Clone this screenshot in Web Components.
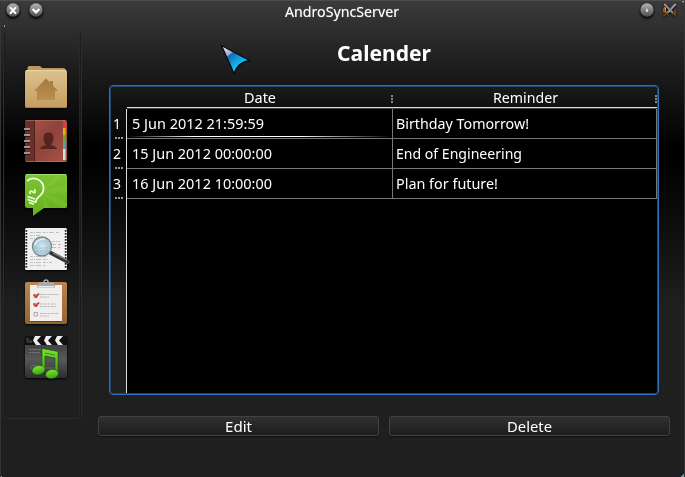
<!DOCTYPE html>
<html lang="en"><head><meta charset="utf-8"><title>AndroSyncServer</title>
<style>html,body{margin:0;background:#1f1f1f}</style></head><body>
<sync-window></sync-window>
<script>
const define = (name, html, setup) => customElements.define(name, class extends HTMLElement {
  connectedCallback() {
    if (this.shadowRoot) return;
    this.attachShadow({mode: 'open'}).innerHTML = html;
    if (setup) setup(this, this.shadowRoot);
  }
});

/* A single line of text fitted to a given width */
define('fit-text', `<style>:host{display:inline-block;white-space:nowrap;text-align:left}span{display:inline-block;transform-origin:0 50%}</style><span><slot></slot></span>`, (el, root) => {
  const s = root.querySelector('span'), w = +el.getAttribute('w');
  el.style.width = w + 'px';
  s.style.transform = `scaleX(${w / s.getBoundingClientRect().width})`;
});

const ICONS = {
home: `<defs><linearGradient id="g" x2="0" y2="1"><stop stop-color="#dcc28f"/><stop offset="1" stop-color="#c59d5e"/></linearGradient><linearGradient id="h" x2="0" y2="1"><stop stop-color="#a5793f"/><stop offset="1" stop-color="#b98f50"/></linearGradient></defs>
<path d="M2.500 6V2Q2.500 0 4.500 0H14Q16 0 17 2H38Q41 2 41 5V12H2z" fill="#bd995f"/><path d="M0 5.500Q0 4 2 4H40Q42 4 42 6V40Q42 42 40 42H2Q0 42 0 40z" fill="url(#g)"/><path d="M1 4.500H41" stroke="#ead5a8"/><path d="M0.500 41.500H41.500" stroke="#a98348"/><path d="M9 25 21 12.500 25 16.500V15H28V19.500L33 25H30V34H12V25z" fill="url(#h)"/>`,
contacts: `<defs><linearGradient id="g" x2="1" y2="1"><stop stop-color="#a9564a"/><stop offset=".5" stop-color="#8f4339"/><stop offset="1" stop-color="#a75146"/></linearGradient></defs>
<rect x="30" width="12" height="42" rx="2" fill="#a4584c"/><path d="M38 2h2.500v6H38z" fill="#e8353d"/><path d="M38 8h2.500v7H38z" fill="#f2a818"/><path d="M38 15h2.500v7H38z" fill="#5eb51d"/><path d="M38 22h2.500v7H38z" fill="#48a6c4"/><path d="M38 29h2.500v11H38z" fill="#ddd"/>
<rect width="38" height="42" rx="2" fill="url(#g)"/><path d="M2 0H9V42H2Q0 42 0 40V2Q0 0 2 0" fill="#6b302a"/><path d="M9.500 0V42" stroke="#4b201b"/><path d="M1 .5H40M1 41.500H40" stroke="#c1786b" opacity=".6"/>
<path d="M15 29Q16 26 21 25Q18.500 22 18.500 18Q18.500 12.500 23.500 12.500Q28.500 12.500 28.500 18Q28.500 22 26 25Q31 26 32 29z" fill="#54241f"/>
<path d="M0 9.500H5M0 15.500H5M0 21.500H5M0 27.500H5M0 33.500H5" stroke="#271410" stroke-width="3"/><path d="M-1 9H5M-1 15H5M-1 21H5M-1 27H5M-1 33H5" stroke="#c8c0bd" stroke-width="1.300"/>`,
idea: `<defs><linearGradient id="g" x2="0" y2="1"><stop stop-color="#7fc433"/><stop offset="1" stop-color="#64b01b"/></linearGradient></defs>
<path d="M2 0H40Q42 0 42 2V32Q42 34 40 34H19L8 42V34H2Q0 34 0 32V2Q0 0 2 0" fill="url(#g)"/><path d="M19 14 34 0H40L20 16 42 11V19L20 19 42 29V34H37L18 21 25 34H18z" fill="#a0d452" opacity=".18"/><path d="M1 .5H41" stroke="#a4db64"/>
<path d="M2 7Q6 3 12 5Q19 8 18.500 15Q18 20 13.500 23Q11 25 10.500 29" fill="none" stroke="#edffe0" stroke-width="1.800"/><path d="M5 20Q4.500 16 7 17.500T10 18.500T9.500 15M2.500 22.500 10 25M2.500 25.500 10 28M4 28.500 9 30.300" fill="none" stroke="#edffe0" stroke-width="1.600"/>`,
search: `<defs><radialGradient id="g"><stop stop-color="#d4e8ef"/><stop offset=".8" stop-color="#a9c9d9"/><stop offset="1" stop-color="#d0e1e5"/></radialGradient></defs>
<rect width="42" height="42" rx="1.500" fill="#f0f0ef"/><path d="M1.300 2V41M40.700 2V41" stroke="#222" stroke-width="1.800" stroke-dasharray="1.700 1.300"/><path d="M5 4.500H34M5 7.500H15M5 10.500H24M27 13.500H35M7 16.500H36M7 19.500H35M5 31.500H24M5 34.500H27M5 37.500H20M5 28.500H22" stroke="#777" stroke-width=".8" stroke-dasharray="3 1 1 1 5 2" opacity=".5"/>
<path d="M26 25 43 34" stroke="#353535" stroke-width="4" stroke-linecap="round"/><path d="M28 25 42 32" stroke="#999" stroke-width="1"/><circle cx="17" cy="18.500" r="9.500" fill="url(#g)" stroke="#77868b" stroke-width="1.300"/><path d="M9 20H24M10 23H23" stroke="#7193a2" stroke-width=".7" stroke-dasharray="4 1" opacity=".5"/><path d="M10 17Q12 11 20 11" stroke="#fff" stroke-width="1.500" fill="none" opacity=".7"/>`,
tasks: `<defs><linearGradient id="g" x2="0" y2="1"><stop stop-color="#b98550"/><stop offset="1" stop-color="#96622f"/></linearGradient></defs>
<rect width="42" height="42" rx="2" fill="url(#g)"/><path d="M5 3H37V39H5z" fill="#f0efed"/><path d="M5 39.500H37" stroke="#704620"/><circle cx="21" cy="0" r="2" fill="none" stroke="#aaa" stroke-width="1.500"/><path d="M12 4Q12 0 17 0H25Q30 0 30 4V5.500H12z" fill="#a9a9a9"/><path d="M13 4.500H29" stroke="#ededed"/>
<path d="M15 12.500H34M15 15H24M15 22H31M15 24.500H31M15 31.500H34M15 34H24" stroke="#bbb" stroke-width="1" stroke-dasharray="3 .7"/><path d="M9 12.500h3v3H9zM9 21.500h3v3H9zM9 30.500h3.500v3.500H9z" fill="none" stroke="#999" stroke-width=".8"/><path d="M8.500 12.500 11 15 14 11.500M8.500 21.500 11 24 14 20.500" fill="none" stroke="#d2302c" stroke-width="1.700"/>`,
media: `<defs><linearGradient id="g" x2="0" y2="1"><stop stop-color="#333"/><stop offset=".55" stop-color="#585858"/><stop offset="1" stop-color="#2e2e2e"/></linearGradient><linearGradient id="h" x2="0" y2="1"><stop stop-color="#7be334"/><stop offset="1" stop-color="#36a610"/></linearGradient></defs>
<rect width="42" height="42" rx="2" fill="url(#g)"/><path d="M2 0H40Q42 0 42 2V9H0V2Q0 0 2 0" fill="#111"/><path d="M10 0H16L12 4.500 16 9H11L8 4.500zM21 0H27L23 4.500 27 9H22L19 4.500zM32 0H38L34 4.500 38 9H33L30 4.500z" fill="#eee"/><path d="M2 2 7 6H2z" stroke="#666" stroke-width=".8" fill="none"/><path d="M4 13.500H16M4 16.500H15M6 29.500H13M5 32H34" stroke="#888" stroke-width=".7" stroke-dasharray="2 .5"/>
<path d="M17 12.500 33 15.500V37H30V22L20 20V33H17z" fill="url(#h)" stroke="#195106" stroke-width=".6"/><path d="M20 17 30 19" stroke="#286c10" stroke-width=".7"/><ellipse cx="13.500" cy="34" rx="6.500" ry="4.500" fill="url(#h)" stroke="#195106" stroke-width=".5" transform="rotate(-12 14 34)"/><ellipse cx="27" cy="38" rx="6.500" ry="4.500" fill="url(#h)" stroke="#195106" stroke-width=".5" transform="rotate(-12 27 38)"/>`,
close: `<circle cx="21" cy="23" r="21" fill="#111"/><circle cx="21" cy="21" r="20" fill="url(#b)"/><path d="M12 14 30 33M30 14 12 33" stroke="#3338" stroke-width="7"/><path d="M12 13 30 32M30 13 12 32" stroke="#fff" stroke-width="6.500"/>`,
shade: `<circle cx="21" cy="23" r="21" fill="#111"/><circle cx="21" cy="21" r="20" fill="url(#b)"/><path d="M11 18 21 28 31 18" stroke="#fff" stroke-width="7" fill="none"/>`,
dot: `<circle cx="21" cy="23" r="21" fill="#111"/><circle cx="21" cy="21" r="20" fill="url(#b)"/><path d="M21 17V27" stroke="#fff" stroke-width="4"/>`,
swords: `<path d="M6 12Q0 20 4 29" fill="none" stroke="#d65b13" stroke-width="4"/><path d="M8 14Q4 24 11 31" fill="none" stroke="#e6b42c" stroke-width="3"/><path d="M35 20Q42 30 33 36M2 39 14 28M29 29 39 41" fill="none" stroke="#745016" stroke-width="4"/><path d="M4 3 29 29M38 3 14 29" stroke="#999ca0" stroke-width="6"/><path d="M9 4 25 22" stroke="#444" stroke-width="2"/><path d="M26 35 36 26M7 28 17 38" stroke="#8b6419" stroke-width="3"/>`
};
define('app-icon', `<style>:host{display:block;width:42px;height:42px;filter:drop-shadow(0 1px 1px #000)}svg{display:block;width:100%;height:100%;overflow:visible}</style><svg viewBox="0 0 42 42"></svg>`, (el, root) => {
  root.querySelector('svg').innerHTML = `<defs><linearGradient id="b" x2="0" y2="1"><stop stop-color="#b4b4b4"/><stop offset="1" stop-color="#4c4c4c"/></linearGradient></defs>` + ICONS[el.getAttribute('name')];
});

define('title-bar', `<style>:host{display:grid;grid-template-columns:6px 15px 8px 15px 1fr 15px 8px 15px 7px;height:25px;align-items:center;color:#fff;box-shadow:inset 0 1px #4d4d4d}
app-icon{width:14px;height:14px;margin-top:-5px}.t{font:15px/20px "Noto Sans",sans-serif;text-align:center;text-shadow:0 0 1px #fff8;margin-top:-3px}</style>
<i></i><app-icon name="close"></app-icon><i></i><app-icon name="shade"></app-icon><div class="t"><slot></slot></div><app-icon name="dot"></app-icon><i></i><app-icon name="swords"></app-icon>`);

define('side-bar', `<style>:host{display:flex;flex-direction:column;gap:12px;align-items:center;box-sizing:border-box;width:79px;height:389px;margin:5px 0 0 3px;padding:35px 0 0 7px;border:1px solid #2c2c2c;border-radius:4px;box-shadow:inset -1px 0 #1118,inset -2px 0 #2b2b2bcc,inset 1px 0 #1118}</style><slot></slot>`);

define('reminder-table', `<style>:host{display:grid;box-sizing:border-box;width:550px;height:310px;border:1px solid #2e70ba;border-radius:4px;padding:1px;grid-template:22px 30px 30px 30px 1fr/16px 266px 1fr;color:#fff;font:14.500px/20px "Noto Sans",sans-serif;overflow:hidden;position:relative;background:linear-gradient(#1b1b1b,#101010 22px,#020202 70px,#0c0c0c 135px,#202020 215px)}
:host::after{content:"";position:absolute;inset:0;border:1px solid #1c4677;border-radius:3px;pointer-events:none}
.h{text-align:center;position:relative;border-bottom:1px solid #ddd;height:21px;box-sizing:border-box;box-shadow:0 1px #444}.h.first{border:0;box-shadow:none}.c{background:#000;border-bottom:1px solid #777;border-right:1px solid #777;padding:5px 0 0 3px;margin-top:0;box-sizing:border-box;position:relative;line-height:20px}
.d{padding-left:5px}.n{padding:5px 0 0 2px;border-right:1px solid #ddd;position:relative;box-sizing:border-box}.n::after{content:"";position:absolute;bottom:0;left:4px;width:9px;height:2px;background:repeating-linear-gradient(90deg,#999 0 2px,transparent 2px 3px)}.n.e::after{display:none}
.h.m::after{content:"";position:absolute;right:0;top:8px;width:2px;height:8px;background:repeating-linear-gradient(#888 0 2px,transparent 2px 3px)}
.c fit-text,.n fit-text{margin-top:-1px;vertical-align:top}
.a::after{content:"";position:absolute;left:0;right:0;bottom:1px;height:1px;background:linear-gradient(90deg,#000,#fff 25%,#fff 65%,#000)}
.f{grid-column:span 2;background:#000}</style>
<div class="h first"></div><div class="h m"><fit-text w="32">Date</fit-text></div><div class="h m"><fit-text w="65">Reminder</fit-text></div>
<div class="n"><fit-text w="8">1</fit-text></div><div class="c d a"><fit-text w="132">5 Jun 2012 21:59:59</fit-text></div><div class="c"><fit-text w="133">Birthday Tomorrow!</fit-text></div>
<div class="n"><fit-text w="8">2</fit-text></div><div class="c d"><fit-text w="140">15 Jun 2012 00:00:00</fit-text></div><div class="c"><fit-text w="126">End of Engineering</fit-text></div>
<div class="n"><fit-text w="8">3</fit-text></div><div class="c d"><fit-text w="140">16 Jun 2012 10:00:00</fit-text></div><div class="c"><fit-text w="102">Plan for future!</fit-text></div>
<div class="n e"></div><div class="f"></div>`);

define('push-button', `<style>:host{display:block;flex:1;height:20px;box-sizing:border-box;border:1px solid #424242;border-radius:3px;background:linear-gradient(#303030,#1d1d1d);box-shadow:0 1px 1px #111;color:#fff;text-align:center;font:14.500px/18px "Noto Sans",sans-serif}</style><slot></slot>`);

define('mouse-pointer', `<style>:host{position:absolute;left:220px;top:44px;width:32px;height:32px}svg{display:block}</style><svg width="32" height="32"><defs><linearGradient id="p" x1="0" y1="0" x2=".8" y2="1"><stop stop-color="#f6f4ff"/><stop offset=".32" stop-color="#aaa9d1"/><stop offset=".36" stop-color="#126bbb"/><stop offset=".75" stop-color="#19c4f4"/></linearGradient></defs><path d="M1.500 1.500 29.500 16.500Q18 18 14 29.500z" fill="url(#p)" stroke="#080b12" stroke-width="1.300"/></svg>`);

define('sync-window', `<style>:host{display:block;position:relative;box-sizing:border-box;width:685px;height:477px;overflow:hidden;background:linear-gradient(135deg,#5aa5c8 2px,transparent 2px),linear-gradient(225deg,#5aa5c8 3px,transparent 3px),linear-gradient(45deg,#5aa5c8 2px,transparent 2px),linear-gradient(315deg,#5aa5c8 3px,transparent 3px),linear-gradient(#3b3b3b,#202020 60px,#171717 85px,#000 148px,#000 158px,#0c0c0c 220px,#1f1f1f 305px);box-shadow:inset 1px 0 #343434,inset -1px 0 #343434}
.body{display:grid;grid-template-columns:98px 1fr}.main{display:flex;flex-direction:column;padding-right:15px}h1{margin:13px 0 0 239px;height:47px;color:#fff;font:bold 22px/28px "Noto Sans",sans-serif}.table{padding-left:11px}.buttons{display:flex;gap:10px;margin-top:21px}
.speck{position:absolute;left:4px;top:25px;width:1px;height:2px;background:#999}</style>
<title-bar><fit-text w="114">AndroSyncServer</fit-text></title-bar><div class="speck"></div>
<div class="body"><side-bar><app-icon name="home"></app-icon><app-icon name="contacts"></app-icon><app-icon name="idea"></app-icon><app-icon name="search"></app-icon><app-icon name="tasks"></app-icon><app-icon name="media"></app-icon></side-bar>
<div class="main"><h1><fit-text w="94">Calender</fit-text></h1><div class="table"><reminder-table></reminder-table></div><div class="buttons"><push-button><fit-text w="27">Edit</fit-text></push-button><push-button><fit-text w="45">Delete</fit-text></push-button></div></div></div><mouse-pointer></mouse-pointer>`);
</script></body></html>
